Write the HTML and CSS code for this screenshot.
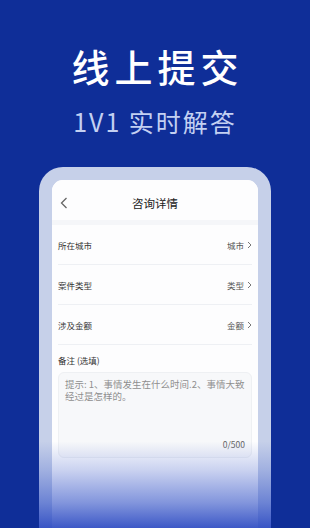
FILE: index.html
```html
<!DOCTYPE html>
<html lang="zh-CN">
<head>
  <meta charset="UTF-8">
  <meta name="viewport" content="width=device-width, initial-scale=1.0">
  <title>线上提交</title>
  <link rel="stylesheet" href="styles.css">
</head>
<body>
  <div class="page">
    <h1 class="headline">线上提交</h1>
    <p class="subline">1V1 实时解答</p>

    <div class="phone">
      <div class="screen">
        <div class="topbar">
          <svg class="back" width="8" height="12" viewBox="0 0 8 12">
            <polyline points="6.5,1 1.5,6 6.5,11" fill="none" stroke="#666" stroke-width="1.3"/>
          </svg>
          <span class="topbar-title">咨询详情</span>
        </div>

        <div class="row">
          <span class="row-label">所在城市</span>
          <span class="row-value">城市
            <svg width="5" height="8" viewBox="0 0 5 8"><polyline points="1,1 4,4 1,7" fill="none" stroke="#777" stroke-width="1"/></svg>
          </span>
        </div>
        <div class="row">
          <span class="row-label">案件类型</span>
          <span class="row-value">类型
            <svg width="5" height="8" viewBox="0 0 5 8"><polyline points="1,1 4,4 1,7" fill="none" stroke="#777" stroke-width="1"/></svg>
          </span>
        </div>
        <div class="row">
          <span class="row-label">涉及金额</span>
          <span class="row-value">金额
            <svg width="5" height="8" viewBox="0 0 5 8"><polyline points="1,1 4,4 1,7" fill="none" stroke="#777" stroke-width="1"/></svg>
          </span>
        </div>

        <div class="remark">
          <div class="remark-label">备注 (选填)</div>
          <div class="remark-box">
            <p class="remark-hint">提示: 1、事情发生在什么时间.2、事情大致经过是怎样的。</p>
            <span class="remark-count">0/500</span>
          </div>
        </div>
      </div>
    </div>
  </div>
</body>
</html>
```

FILE: styles.css
```css
/* General */
body {
  margin: 0;
  padding: 0;
  background-color: #0f2e98;
  font-family: "Noto Sans CJK SC", "Noto Sans", sans-serif;
}

.page {
  height: 528px;
  overflow: hidden;
  display: flex;
  flex-direction: column;
  align-items: center;
}

/* Headline */
.headline {
  margin: 42px 0 0;
  font-size: 38px;
  font-weight: 500;
  line-height: 48px;
  letter-spacing: 5px;
  padding-left: 5px;
  color: #fff;
}

.subline {
  margin: 15px 0 0;
  font-size: 25px;
  line-height: 32px;
  letter-spacing: 2px;
  color: #c3d0f2;
}

/* Phone frame */
.phone {
  position: relative;
  margin-top: 30px;
  width: 206px;
  height: 348px;
  border: 13px solid #c6d0e9;
  border-bottom: none;
  border-radius: 24px 24px 0 0;
  background: #fff;
}

.phone::after {
  content: "";
  position: absolute;
  left: -13px;
  right: -13px;
  top: -13px;
  bottom: 0;
  border-radius: 24px 24px 0 0;
  background: linear-gradient(to bottom,
    rgba(48, 80, 198, 0) 0%,
    rgba(48, 80, 198, 0) 76%,
    rgba(48, 80, 198, 0.25) 84%,
    rgba(48, 80, 198, 0.6) 93%,
    rgba(44, 74, 194, 0.92) 100%);
}

.screen {
  height: 100%;
  border-radius: 11px 11px 0 0;
  background: #fdfdfe;
  overflow: hidden;
}

/* Top bar */
.topbar {
  position: relative;
  height: 40px;
  display: flex;
  align-items: center;
  justify-content: center;
  border-bottom: 5px solid #f5f6f9;
}

.back {
  position: absolute;
  left: 8px;
  top: 17px;
}

.topbar-title {
  font-size: 11.5px;
  color: #222;
  padding-top: 6px;
}

/* Rows */
.row {
  height: 39px;
  margin: 0 6px;
  display: flex;
  align-items: center;
  justify-content: space-between;
  border-bottom: 1px solid #eef0f4;
}

.row-label {
  font-size: 8.5px;
  color: #333;
}

.row-value {
  display: flex;
  align-items: center;
  gap: 3px;
  font-size: 8.5px;
  color: #555;
}

/* Remark */
.remark {
  margin: 0 6px;
}

.remark-label {
  font-size: 8.5px;
  color: #333;
  padding-top: 9px;
  line-height: 12px;
}

.remark-box {
  margin-top: 6px;
  height: 86px;
  background: #f7f8fa;
  border: 1px solid #eef0f3;
  border-radius: 6px;
  display: flex;
  flex-direction: column;
  justify-content: space-between;
  padding: 5px 6px 7px;
  box-sizing: border-box;
}

.remark-hint {
  margin: 0;
  font-size: 9.5px;
  line-height: 12px;
  color: #8f8f8f;
}

.remark-count {
  align-self: flex-end;
  font-size: 8.5px;
  color: #666;
}
```
